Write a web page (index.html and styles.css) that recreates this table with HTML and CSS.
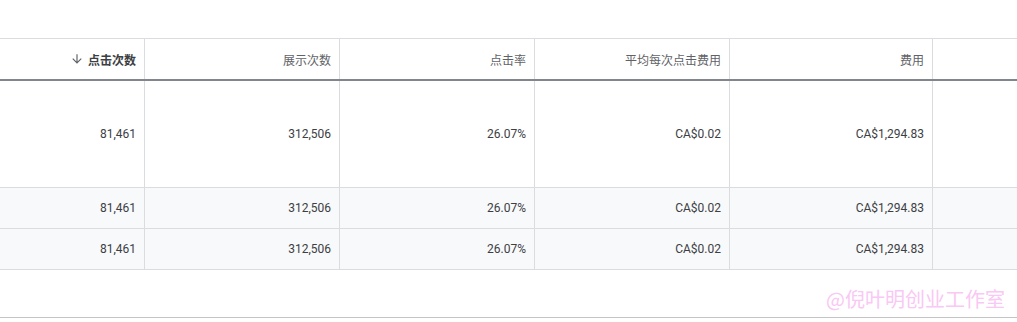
FILE: index.html
```html
<!DOCTYPE html>
<html lang="zh-CN">
<head>
  <meta charset="UTF-8" />
  <title>统计表格</title>
  <link rel="stylesheet" href="styles.css">
</head>
<body>

  <div class="panel">
    <div class="table">
      <div class="row head">
        <div class="cell sorted">
          <svg class="sort-icon" viewBox="0 0 24 24" width="14" height="14"><path d="M20 12l-1.41-1.41L13 16.17V4h-2v12.17l-5.58-5.59L4 12l8 8 8-8z"/></svg>
          点击次数
        </div>
        <div class="cell">展示次数</div>
        <div class="cell">点击率</div>
        <div class="cell">平均每次点击费用</div>
        <div class="cell">费用</div>
        <div class="cell"></div>
      </div>

      <div class="row tall">
        <div class="cell">81,461</div>
        <div class="cell">312,506</div>
        <div class="cell">26.07%</div>
        <div class="cell">CA$0.02</div>
        <div class="cell">CA$1,294.83</div>
        <div class="cell"></div>
      </div>

      <div class="row total">
        <div class="cell">81,461</div>
        <div class="cell">312,506</div>
        <div class="cell">26.07%</div>
        <div class="cell">CA$0.02</div>
        <div class="cell">CA$1,294.83</div>
        <div class="cell"></div>
      </div>

      <div class="row total">
        <div class="cell">81,461</div>
        <div class="cell">312,506</div>
        <div class="cell">26.07%</div>
        <div class="cell">CA$0.02</div>
        <div class="cell">CA$1,294.83</div>
        <div class="cell"></div>
      </div>
    </div>

    <div class="watermark">@倪叶明创业工作室</div>
  </div>

</body>
</html>
```

FILE: styles.css
```css
body {
  margin: 0;
  background: #fff;
  font-family: Roboto, "Noto Sans CJK SC", sans-serif;
  font-size: 12px;
  color: #3c4043;
  overflow: hidden;
}

.panel {
  position: relative;
  height: 318px;
  padding-top: 38px;
  box-sizing: border-box;
  border-bottom: 1px solid #c4c4c4;
  box-shadow: 0 1px 2px rgba(0, 0, 0, 0.12);
}

.table {
  border-top: 1px solid #dadce0;
}

.row {
  display: grid;
  grid-template-columns: 145px 195px 195px 195px 203px 1fr;
  border-bottom: 1px solid #dadce0;
}

.cell {
  display: flex;
  align-items: center;
  justify-content: flex-end;
  padding: 0 8px;
  border-right: 1px solid #dadce0;
  white-space: nowrap;
}

.cell:last-child {
  border-right: none;
}

.head {
  height: 40px;
  border-bottom: 2px solid #80868b;
  color: #5f6368;
}

.head .sorted {
  font-weight: bold;
  color: #3c4043;
  gap: 4px;
}

.sort-icon {
  fill: #5f6368;
}

.tall {
  height: 106px;
}

.total {
  height: 40px;
  background: #f8f9fa;
}

.watermark {
  position: absolute;
  right: 12px;
  bottom: 4px;
  font-family: "Noto Sans CJK SC", sans-serif;
  font-size: 20px;
  color: #f9c8f4;
}
```
